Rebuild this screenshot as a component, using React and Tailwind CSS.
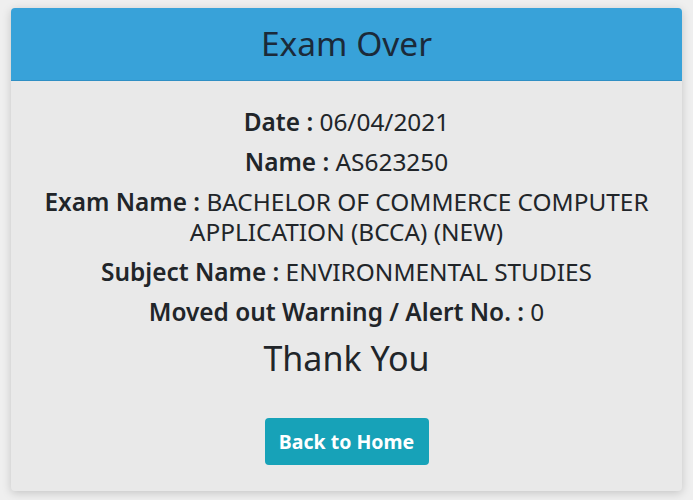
export default function App() {
  const font = { fontFamily: '"Noto Sans", "Open Sans", sans-serif' };
  return (
    <div className="w-[693px] h-[500px] bg-[#efefef] pt-[8px] px-[11px]" style={font}>
      <div className="w-[671px] h-[483px] rounded-[4px] bg-[#e9e9e9] shadow-[0_2px_10px_rgba(0,0,0,0.18)] overflow-hidden flex flex-col">
        <div className="h-[73px] bg-[#38a2d9] border-b border-[#2f8fc4] flex items-center justify-center">
          <h1 className="text-[33.5px] text-[#1b2a3a] leading-none">Exam Over</h1>
        </div>
        <div className="flex flex-col items-center text-center text-[#212529] text-[24.4px] leading-[30px] px-[16px] pt-[26px]">
          <p className="mb-[10px]"><b className="font-semibold">Date :</b> 06/04/2021</p>
          <p className="mb-[10px]"><b className="font-semibold">Name :</b> AS623250</p>
          <p className="mb-[10px]"><b className="font-semibold">Exam Name :</b> BACHELOR OF COMMERCE COMPUTER APPLICATION (BCCA) (NEW)</p>
          <p className="mb-[10px]"><b className="font-semibold">Subject Name :</b> ENVIRONMENTAL STUDIES</p>
          <p className="mb-[9px]"><b className="font-semibold">Moved out Warning / Alert No. :</b> 0</p>
          <p className="text-[34px] leading-[44px]">Thank You</p>
          <button className="mt-[38px] w-[164px] h-[47px] rounded-[4px] bg-[#17a2b8] text-white text-[19.5px] font-bold">Back to Home</button>
        </div>
      </div>
    </div>
  );
}
